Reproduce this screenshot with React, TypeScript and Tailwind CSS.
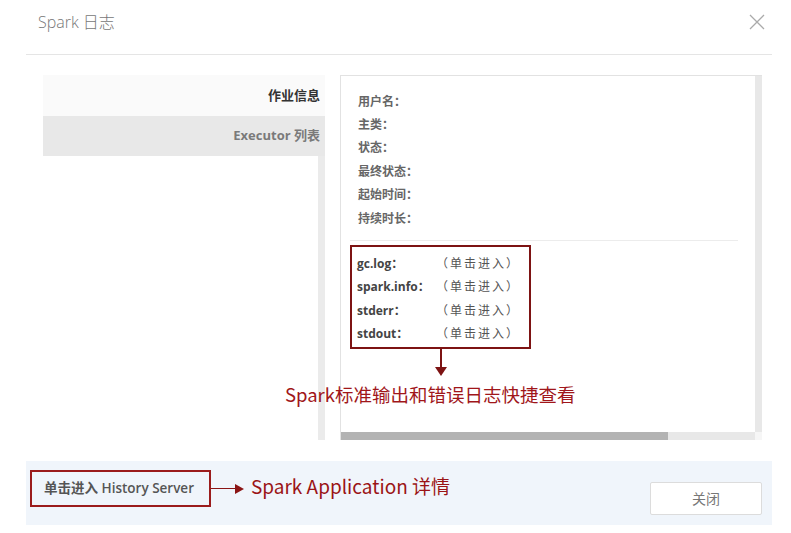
import React from "react";

const F = { fontFamily: '"Open Sans","Noto Sans CJK SC",sans-serif' };

export default function App() {
  const info = ["用户名：", "主类：", "状态：", "最终状态：", "起始时间：", "持续时长："];
  const logs = ["gc.log：", "spark.info：", "stderr：", "stdout："];
  return (
    <div className="relative w-[791px] h-[533px] bg-white overflow-hidden" style={F}>
      {/* header */}
      <div className="ml-[26px] w-[746px] h-[55px] border-b border-[#e5e5e5] flex items-start justify-between">
        <div className="pl-[12px] pt-[10px] text-[16px] text-[#777] font-light">Spark 日志</div>
        <svg className="mt-[14px] mr-[7px]" width="16" height="16" viewBox="0 0 16 16">
          <path d="M1 1L15 15M15 1L1 15" stroke="#aaa" strokeWidth="1.3" />
        </svg>
      </div>

      {/* body */}
      <div className="flex ml-[43px] mt-[20px] h-[365px]">
        {/* left tabs */}
        <div className="w-[282px] flex flex-col">
          <div className="h-[41px] bg-[#fafafa] flex items-center justify-end pr-[5px] text-[13px] font-bold text-[#333]">
            作业信息
          </div>
          <div className="h-[40px] bg-[#e8e8e8] flex items-center justify-end pr-[5px] text-[13px] font-bold text-[#7a7a7a]">
            Executor 列表
          </div>
          <div className="flex-1 flex justify-end">
            <div className="w-[7px] bg-[#ebebeb]" />
          </div>
        </div>

        {/* right panel */}
        <div className="ml-[15px] w-[422px] border-t border-l border-[#e2e2e2] flex flex-col">
          <div className="flex flex-1">
            <div className="flex-1 pl-[9px] pt-[14px]">
              <div className="w-[388px]">
                <div className="pl-[8px] pb-[10px]">
                  {info.map((t) => (
                    <div key={t} className="h-[23.4px] flex items-center text-[12px] font-bold text-[#666]">
                      {t}
                    </div>
                  ))}
                </div>
                <div className="border-t border-[#ececec] pt-[4px]">
                  <div className="relative w-[181px] h-[104px] border-2 border-[#7d1313] pl-[5px] pt-[5px]">
                    {logs.map((t) => (
                      <div key={t} className="h-[23.3px] flex items-center text-[12px]">
                        <span className="w-[79px] font-bold text-[#444]">{t}</span>
                        <span className="text-[#555] tracking-[2px]">（单击进入）</span>
                      </div>
                    ))}
                    {/* arrow down */}
                    <div className="absolute left-[88px] top-[100px] w-[2px] h-[22px] bg-[#7d1313]" />
                    <svg className="absolute left-[83px] top-[120px]" width="12" height="9" viewBox="0 0 12 9">
                      <path d="M0 0L12 0L6 9Z" fill="#7d1313" />
                    </svg>
                  </div>
                </div>
              </div>
            </div>
            <div className="w-[7px] bg-[#e8e8e8]" />
          </div>
          <div className="flex h-[8px]">
            <div className="w-[327px] bg-[#b3b3b3]" />
            <div className="w-[87px] bg-[#e8e8e8]" />
            <div className="w-[7px] bg-[#f6f6f6]" />
          </div>
        </div>
      </div>

      {/* annotation text */}
      <div
        className="absolute left-[285px] top-[381px] text-[18.5px] text-[#a0161a] leading-[26px] whitespace-nowrap"
        style={{ fontFamily: '"Noto Sans CJK SC","Open Sans",sans-serif' }}
      >
        Spark标准输出和错误日志快捷查看
      </div>

      {/* footer */}
      <div className="ml-[26px] w-[746px] mt-[21px] h-[64px] bg-[#f0f5fb] flex items-start justify-between">
        <div className="flex items-center mt-[9px] ml-[4px]">
          <div className="w-[181px] h-[37px] border-2 border-[#9b1c1c] flex items-center pl-[12px] text-[13.5px] font-semibold text-[#555]">
            单击进入 History Server
          </div>
          <div className="w-[24px] h-[1.5px] bg-[#8b1515]" />
          <svg width="9" height="10" viewBox="0 0 9 10">
            <path d="M0 0L9 5L0 10Z" fill="#8b1515" />
          </svg>
          <div className="ml-[7px] -mt-[4px] text-[19px] text-[#9b1416] whitespace-nowrap" style={{ fontFamily: '"Noto Sans CJK SC","Open Sans",sans-serif' }}>
            Spark Application 详情
          </div>
        </div>
        <button className="mt-[21px] mr-[10px] w-[112px] h-[33px] bg-white border border-[#dcdcdc] rounded-[2px] text-[14px] text-[#777]">
          关闭
        </button>
      </div>
    </div>
  );
}
